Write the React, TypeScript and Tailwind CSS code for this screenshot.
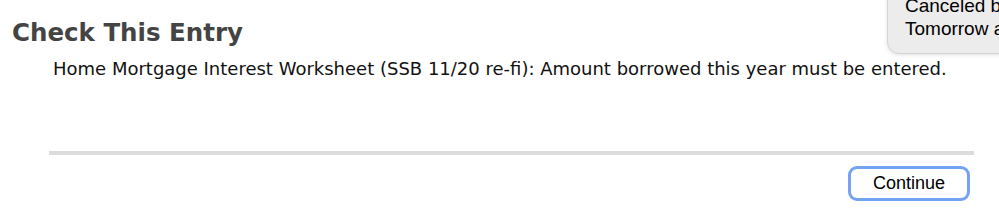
export default function App() {
  return (
    <div className="relative w-[999px] h-[220px] overflow-hidden bg-white font-['DejaVu_Sans',sans-serif]">
      {/* notification banner, partly off screen */}
      <div className="absolute left-[887px] top-[-14px] w-[150px] h-[68px] rounded-[12px] border border-[#d4d4d4] bg-[#ececec] shadow-[0_1px_4px_rgba(0,0,0,0.12)] pl-[17px] pt-[7px] font-['Liberation_Sans',sans-serif] text-[19px] leading-[23px] text-black whitespace-nowrap">
        <div>Canceled by</div>
        <div>Tomorrow at</div>
      </div>

      <div className="pt-[17px] pl-[12px]">
        <h1 className="text-[24.5px] leading-[32px] font-bold text-[#444444]">Check This Entry</h1>
      </div>

      <div className="pl-[53px] pt-[8px]">
        <p className="text-[18px] leading-[24px] text-[#111111]">
          Home Mortgage Interest Worksheet (SSB 11/20 re-fi): Amount borrowed this year must be entered.
        </p>
      </div>

      <div className="ml-[49px] mr-[25px] mt-[70px] h-[4px] bg-[#dcdcdc]" />

      <div className="flex justify-end pr-[29px] pt-[11px]">
        <button className="w-[122px] h-[35px] rounded-[9px] border-[3px] border-[#74a3f3] bg-white font-['Liberation_Sans',sans-serif] text-[18px] text-black leading-none pb-[2px]">
          Continue
        </button>
      </div>
    </div>
  );
}
